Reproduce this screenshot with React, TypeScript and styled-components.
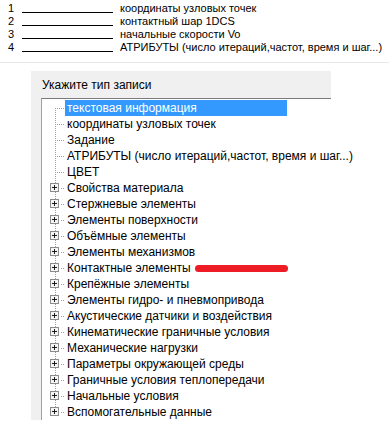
import React from "react";
import styled, { createGlobalStyle } from "styled-components";

const GlobalStyle = createGlobalStyle`
  html, body { margin: 0; padding: 0; background: #ffffff; }
  body {
    font-family: "Liberation Sans", Arial, sans-serif;
    font-size: 11px;
    color: #000000;
  }
`;

const Page = styled.div`
  width: 389px;
  height: 428px;
  overflow: hidden;
  background: #ffffff;
`;

const TopList = styled.div`
  padding: 2px 0 0 8px;
  display: flex;
  flex-direction: column;
`;

const TopRow = styled.div`
  height: 13px;
  display: flex;
  align-items: flex-end;
  line-height: 13px;
  white-space: nowrap;
`;

const Num = styled.span`
  width: 14px;
`;

const Blank = styled.span`
  display: inline-block;
  width: 91px;
  height: 10px;
  border-bottom: 1px solid #000000;
  margin-right: 7px;
  align-self: flex-start;
`;

const Separator = styled.div`
  height: 1px;
  background: #e8e8e8;
  margin-top: 8px;
`;

const Dialog = styled.div`
  margin: 8px 0 0 31px;
  width: 300px;
  background: #f0f0f0;
  display: flex;
  flex-direction: column;
`;

const Header = styled.div`
  height: 27px;
  padding-left: 11px;
  display: flex;
  align-items: center;
  font-size: 12px;
`;

const TreeBox = styled.div`
  margin-left: 10px;
  border-top: 1px solid #7a7a7a;
  border-left: 1px solid #a0a0a0;
  background: #ffffff;
  padding: 1px 0 0 0;
  display: flex;
  flex-direction: column;
  font-size: 12px;
`;

const Row = styled.div`
  height: 16px;
  display: flex;
  align-items: center;
  white-space: nowrap;
`;

const Gutter = styled.svg`
  width: 23px;
  height: 16px;
  flex: none;
  display: block;
`;

const Label = styled.span<{ $selected?: boolean }>`
  display: inline-flex;
  align-items: center;
  height: 16px;
  padding: 0 2px;
  ${(p) =>
    p.$selected
      ? `background: #3399ff; color: #ffffff; width: 222px; box-sizing: border-box;`
      : ``}
`;

const RedMark = styled.span`
  display: inline-block;
  width: 93px;
  height: 7px;
  border-radius: 4px;
  background: #ee1c25;
  margin-left: 2px;
  margin-top: 1px;
`;

const DOT = "#a0a0a0";

function dotsV(x: number, y1: number, y2: number) {
  const out: React.ReactNode[] = [];
  for (let y = y1; y <= y2; y++) {
    if (y % 2 === 0) out.push(<rect key={`v${x}-${y}`} x={x} y={y} width={1} height={1} fill={DOT} />);
  }
  return out;
}

function dotsH(y: number, x1: number, x2: number) {
  const out: React.ReactNode[] = [];
  for (let x = x1; x <= x2; x++) {
    if (x % 2 === 1) out.push(<rect key={`h${x}-${y}`} x={x} y={y} width={1} height={1} fill={DOT} />);
  }
  return out;
}

function Connector({ first, last, expand }: { first: boolean; last: boolean; expand: boolean }) {
  const cx = 13;
  const cy = 8;
  return (
    <Gutter viewBox="0 0 23 16" shapeRendering="crispEdges">
      {dotsV(cx, first ? cy : 0, last ? cy : 15)}
      {expand ? (
        <>
          {dotsH(cy, 18, 22)}
          <rect x={8.5} y={3.5} width={8} height={8} fill="#f4f4f4" stroke="#8c8c8c" strokeWidth={1} />
          <rect x={10} y={7} width={5} height={1} fill="#1a1a1a" />
          <rect x={12} y={5} width={1} height={5} fill="#1a1a1a" />
        </>
      ) : (
        dotsH(cy, cx, 22)
      )}
    </Gutter>
  );
}

const topItems = [
  "координаты узловых точек",
  "контактный шар 1DCS",
  "начальные скорости Vo",
  "АТРИБУТЫ (число итераций,частот, время и шаг...)",
];

type Item = { text: string; expand: boolean; selected?: boolean; mark?: boolean };

const treeItems: Item[] = [
  { text: "текстовая информация", expand: false, selected: true },
  { text: "координаты узловых точек", expand: false },
  { text: "Задание", expand: false },
  { text: "АТРИБУТЫ (число итераций,частот, время и шаг...)", expand: false },
  { text: "ЦВЕТ", expand: false },
  { text: "Свойства материала", expand: true },
  { text: "Стержневые элементы", expand: true },
  { text: "Элементы поверхности", expand: true },
  { text: "Объёмные элементы", expand: true },
  { text: "Элементы механизмов", expand: true },
  { text: "Контактные элементы", expand: true, mark: true },
  { text: "Крепёжные элементы", expand: true },
  { text: "Элементы гидро- и пневмопривода", expand: true },
  { text: "Акустические датчики и воздействия", expand: true },
  { text: "Кинематические граничные условия", expand: true },
  { text: "Механические нагрузки", expand: true },
  { text: "Параметры окружающей среды", expand: true },
  { text: "Граничные условия теплопередачи", expand: true },
  { text: "Начальные условия", expand: true },
  { text: "Вспомогательные данные", expand: true },
];

export default function App() {
  return (
    <Page>
      <GlobalStyle />
      <TopList>
        {topItems.map((t, i) => (
          <TopRow key={i}>
            <Num>{i + 1}</Num>
            <Blank />
            <span>{t}</span>
          </TopRow>
        ))}
      </TopList>
      <Separator />
      <Dialog>
        <Header>Укажите тип записи</Header>
        <TreeBox>
          {treeItems.map((it, i) => (
            <Row key={i}>
              <Connector first={i === 0} last={i === treeItems.length - 1} expand={it.expand} />
              <Label $selected={it.selected}>{it.text}</Label>
              {it.mark && <RedMark />}
            </Row>
          ))}
        </TreeBox>
      </Dialog>
    </Page>
  );
}
